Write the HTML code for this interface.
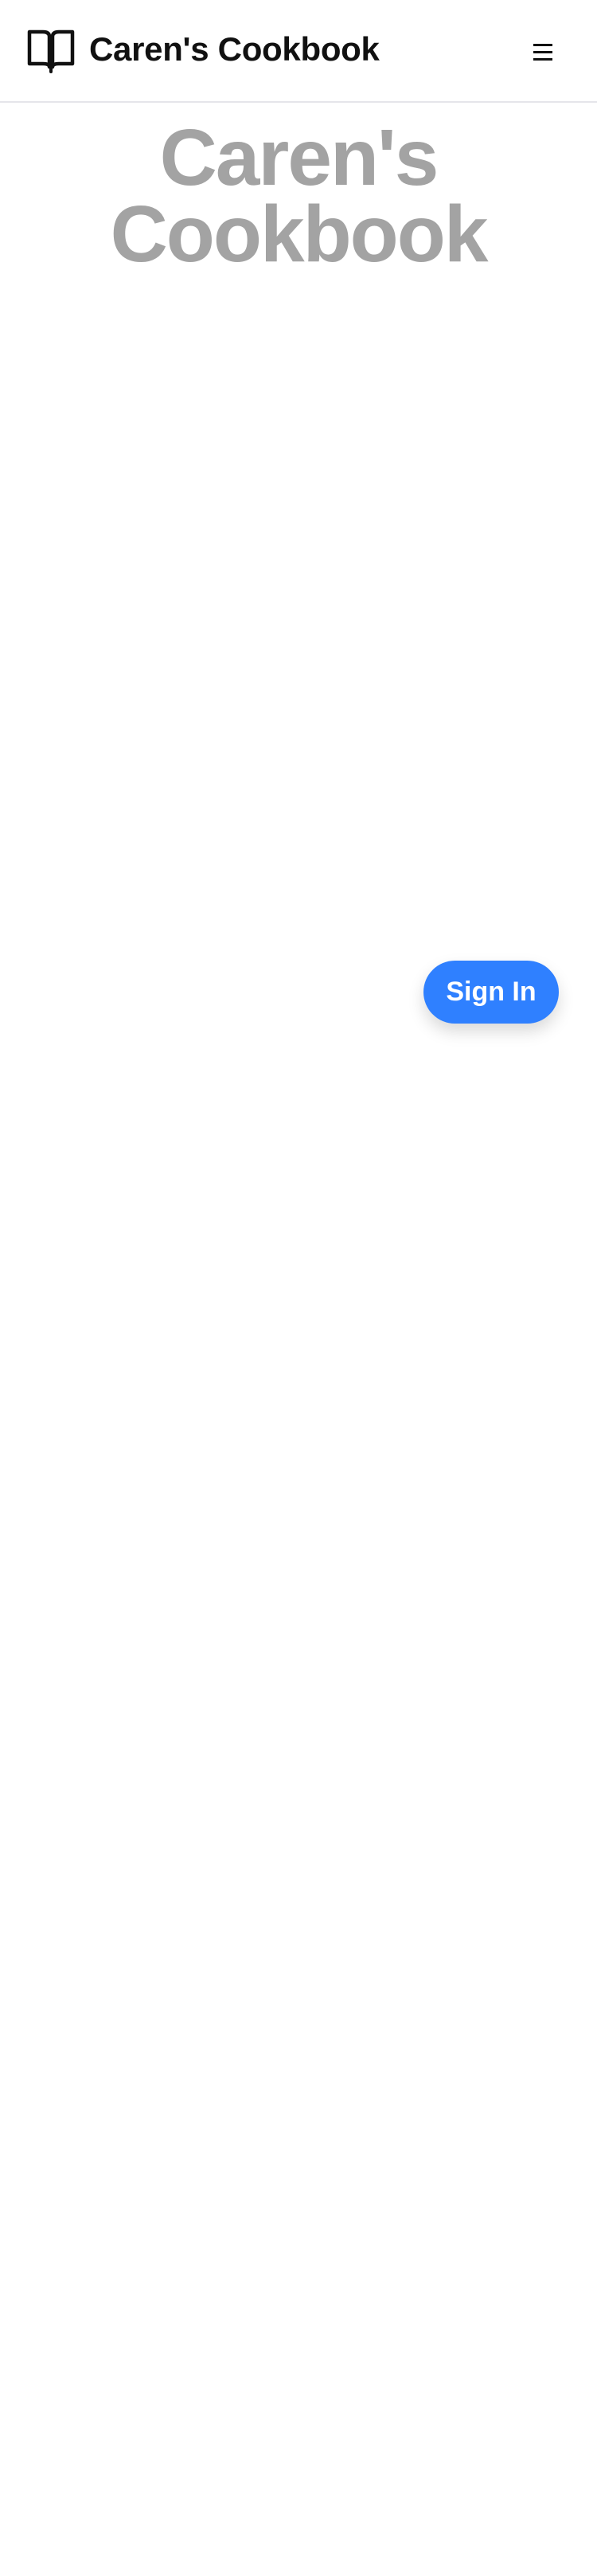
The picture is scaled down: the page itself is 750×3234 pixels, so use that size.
<!DOCTYPE html>
<html><head><meta charset="utf-8"><style>
html,body{margin:0;padding:0;background:#fff;width:750px;height:3234px;overflow:hidden;font-family:"Liberation Sans",sans-serif}
.hdr{position:absolute;left:0;top:0;width:750px;height:127px;border-bottom:2px solid #e5e5ea}
.logo{position:absolute;left:34px;top:36px}
.ttl{position:absolute;left:112px;top:38px;font-size:42px;font-weight:bold;color:#111;white-space:nowrap;letter-spacing:-0.3px}
.ham{position:absolute;left:670px;top:55px;width:24px}
.ham div{height:2.5px;background:#111;margin-bottom:6.5px}
.big{position:absolute;left:0;top:150px;width:750px;text-align:center;color:#a3a3a3;font-weight:bold;font-size:100px;line-height:96px;letter-spacing:-2px}
.big span{display:inline-block;white-space:nowrap}
.btn{position:absolute;left:532px;top:1206px;width:170px;height:79px;border-radius:40px;background:#2f80ff;color:#fff;font-weight:bold;font-size:34px;line-height:79px;text-align:center;box-shadow:0 10px 20px rgba(0,0,0,0.15)}
</style></head><body>
<div class="hdr">
<svg class="logo" width="60" height="56" viewBox="0 0 60 56"><path d="M3 4 H20 Q28 4 28 10 V48 Q28 44 20 44 H3 Z M57 4 H40 Q32 4 32 10 V48 Q32 44 40 44 H57 Z" fill="none" stroke="#111" stroke-width="4.5" stroke-linejoin="round"/><path d="M30 46 V54" stroke="#111" stroke-width="4" stroke-linecap="round"/></svg>
<div class="ttl">Caren's Cookbook</div>
<div class="ham"><div></div><div></div><div></div></div>
</div>
<div class="big"><span>Caren's</span><br><span>Cookbook</span></div>
<div class="btn">Sign In</div>
</body></html>
